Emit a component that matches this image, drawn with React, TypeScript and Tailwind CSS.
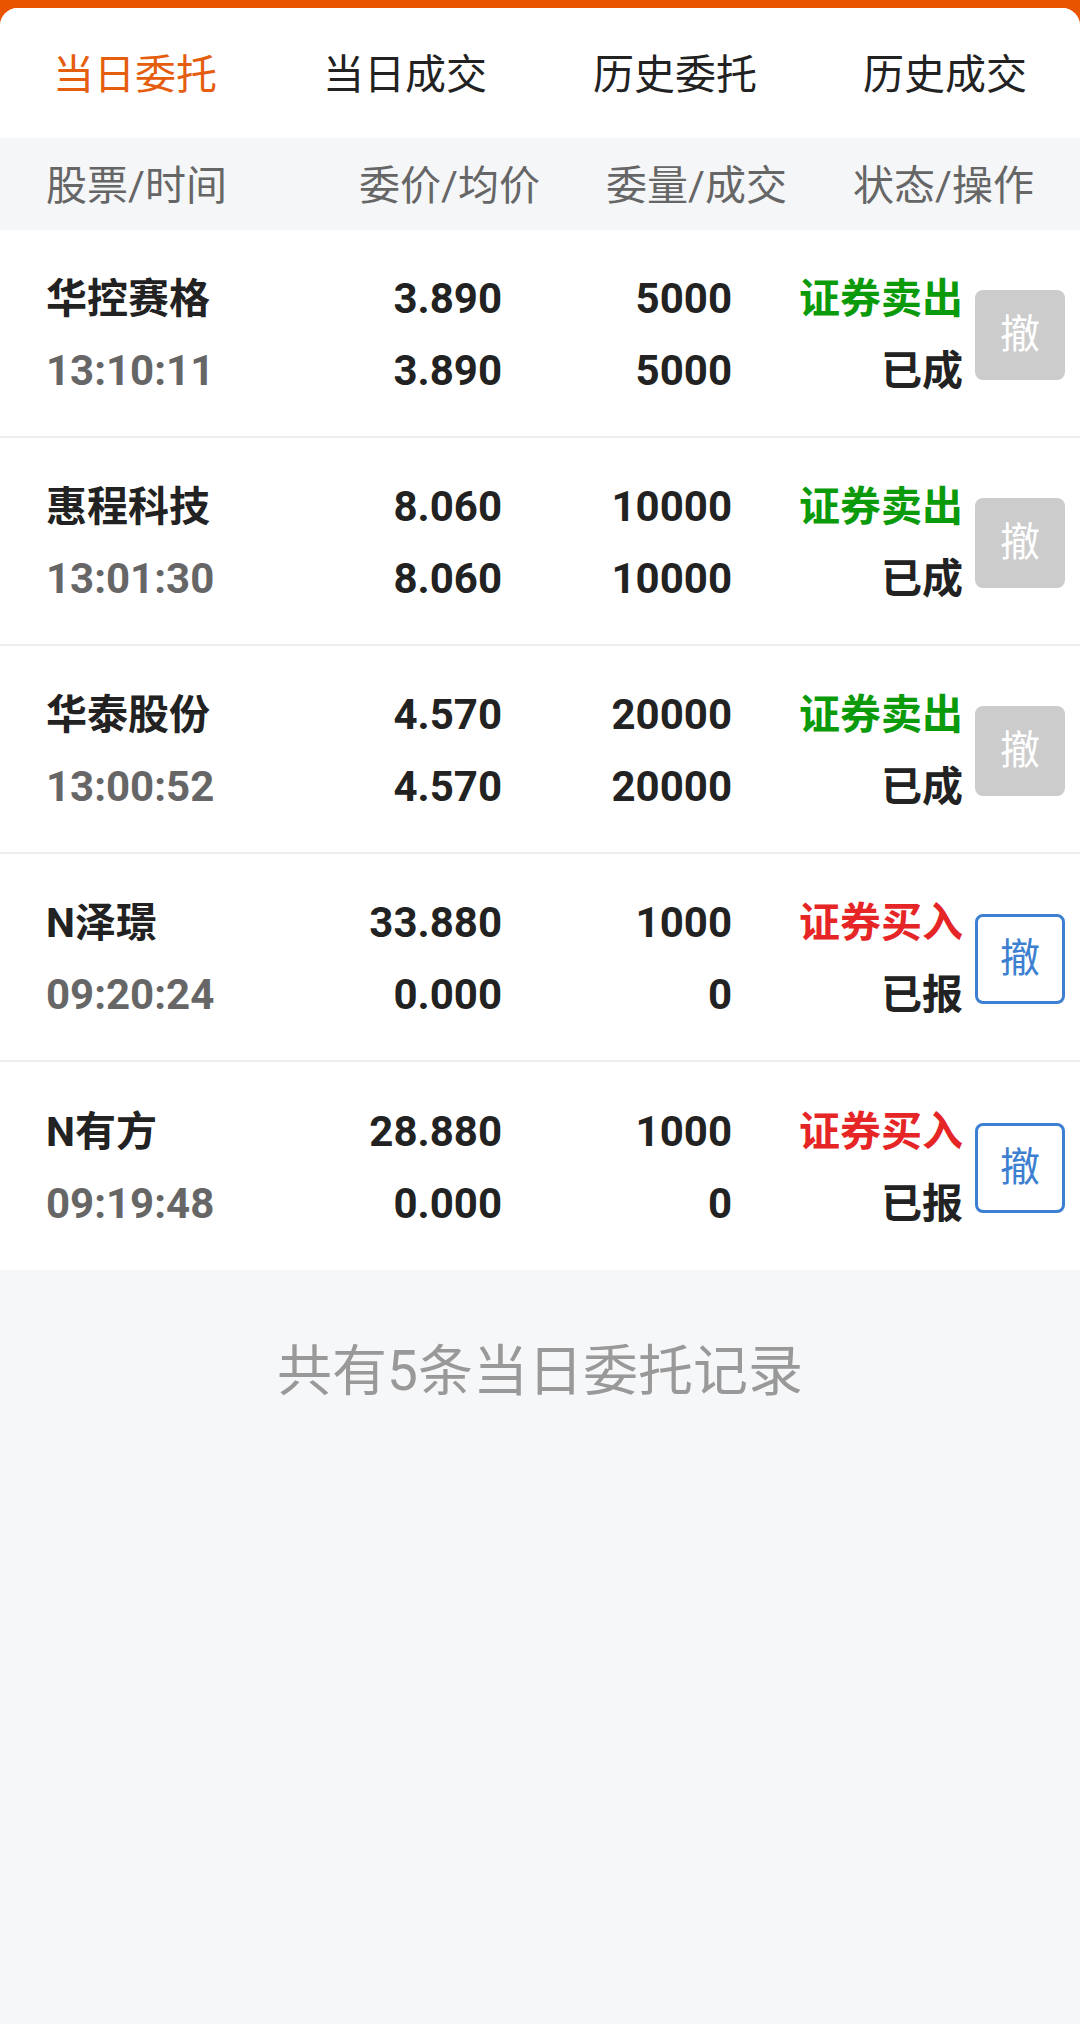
import React from 'react';

type Order = {
  name: string;
  time: string;
  price: string;
  avg: string;
  qty: string;
  filled: string;
  side: 'buy' | 'sell';
  status: string;
  cancelable: boolean;
};

const orders: Order[] = [
  { name: '华控赛格', time: '13:10:11', price: '3.890', avg: '3.890', qty: '5000', filled: '5000', side: 'sell', status: '已成', cancelable: false },
  { name: '惠程科技', time: '13:01:30', price: '8.060', avg: '8.060', qty: '10000', filled: '10000', side: 'sell', status: '已成', cancelable: false },
  { name: '华泰股份', time: '13:00:52', price: '4.570', avg: '4.570', qty: '20000', filled: '20000', side: 'sell', status: '已成', cancelable: false },
  { name: 'N泽璟', time: '09:20:24', price: '33.880', avg: '0.000', qty: '1000', filled: '0', side: 'buy', status: '已报', cancelable: true },
  { name: 'N有方', time: '09:19:48', price: '28.880', avg: '0.000', qty: '1000', filled: '0', side: 'buy', status: '已报', cancelable: true },
];

const tabs = ['当日委托', '当日成交', '历史委托', '历史成交'];

const font = { fontFamily: "Roboto, 'Noto Sans CJK SC', sans-serif" };

export default function App() {
  return (
    <div className="min-h-[2024px] bg-[#e85400] pt-[8px]" style={font}>
      <div className="min-h-[2016px] rounded-t-[18px] bg-[#f6f7f9] overflow-hidden">
        {/* Tabs */}
        <div className="grid grid-cols-4 h-[130px] bg-white">
          {tabs.map((t, i) => (
            <div
              key={t}
              className={`flex items-center justify-center pt-[6px] text-[41px] ${i === 0 ? 'text-[#e55d0e]' : 'text-[#222222]'}`}
            >
              {t}
            </div>
          ))}
        </div>

        {/* Column header */}
        <div className="grid grid-cols-4 h-[92px] px-[46px] items-center bg-[#f5f6f8] text-[41px] text-[#666666] pt-[6px]">
          <div className="text-left">股票/时间</div>
          <div className="text-right">委价/均价</div>
          <div className="text-right">委量/成交</div>
          <div className="text-right">状态/操作</div>
        </div>

        {/* Rows */}
        <div className="bg-white">
          {orders.map((o, i) => (
            <div
              key={o.name}
              className={`flex items-center h-[208px] pl-[46px] pr-[15px] pt-[4px] ${i < orders.length - 1 ? 'border-b-2 border-[#eeeeee]' : ''}`}
            >
              <div className="w-[226px] flex flex-col text-[41px] font-bold leading-[72px]">
                <span className="text-[#222222]">{o.name}</span>
                <span className="text-[#666666] text-[42px]">{o.time}</span>
              </div>
              <div className="w-[230px] flex flex-col items-end text-[42px] font-bold leading-[72px] text-[#222222]">
                <span>{o.price}</span>
                <span>{o.avg}</span>
              </div>
              <div className="w-[230px] flex flex-col items-end text-[42px] font-bold leading-[72px] text-[#222222]">
                <span>{o.qty}</span>
                <span>{o.filled}</span>
              </div>
              <div className="w-[231px] flex flex-col items-end text-[41px] font-bold leading-[72px]">
                <span className={o.side === 'sell' ? 'text-[#0a9a0a]' : 'text-[#e62626]'}>
                  {o.side === 'sell' ? '证券卖出' : '证券买入'}
                </span>
                <span className="text-[#222222]">{o.status}</span>
              </div>
              <div className="ml-[12px]">
                {o.cancelable ? (
                  <button className="w-[90px] h-[90px] rounded-[8px] border-[3px] border-[#3d7fd0] bg-white text-[#3d7fd0] text-[40px] flex items-center justify-center">
                    撤
                  </button>
                ) : (
                  <button className="w-[90px] h-[90px] rounded-[8px] bg-[#cccccc] text-white text-[40px] flex items-center justify-center">
                    撤
                  </button>
                )}
              </div>
            </div>
          ))}
        </div>

        {/* Footer note */}
        <div className="pt-[66px] text-center text-[55px] leading-[70px] text-[#999999]">
          共有5条当日委托记录
        </div>
      </div>
    </div>
  );
}
